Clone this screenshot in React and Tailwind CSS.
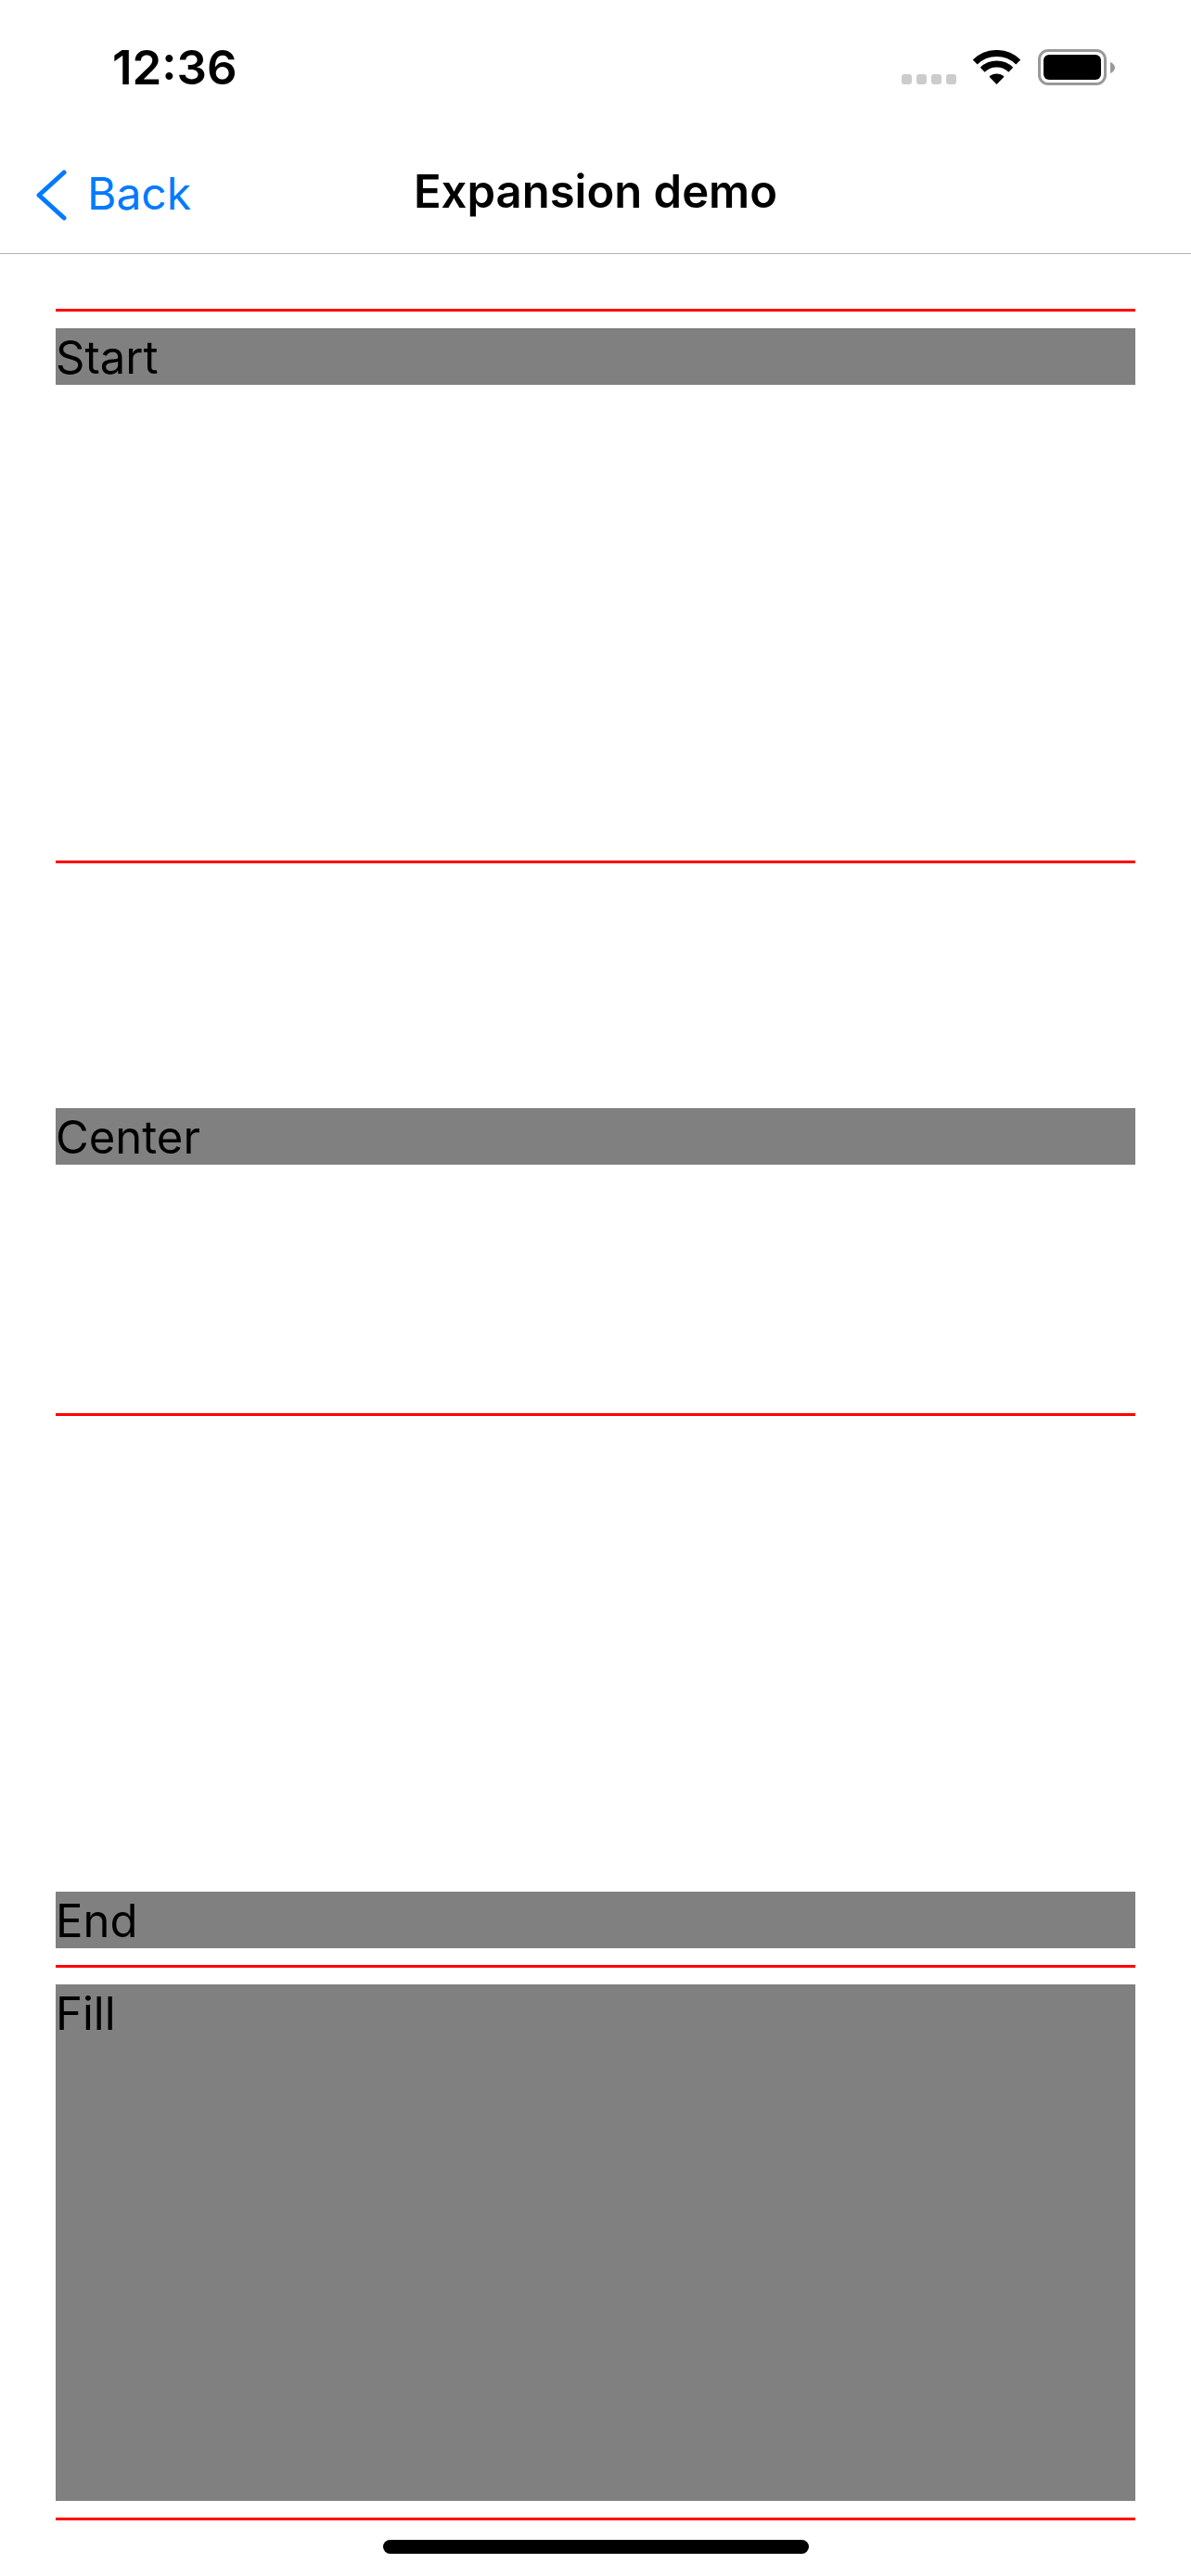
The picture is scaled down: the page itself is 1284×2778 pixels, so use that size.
function WifiIcon() {
  return (
    <svg width="51" height="37" viewBox="0 0 51 37" fill="none">
      <path d="M2.2 12.9A33.5 33.5 0 0 1 48.8 12.9" stroke="#000" strokeWidth="7" />
      <path d="M10.2 21.2A22 22 0 0 1 40.8 21.2" stroke="#000" strokeWidth="7" />
      <path d="M25.5 37L17.5 28.7A11.5 11.5 0 0 1 33.5 28.7Z" fill="#000" />
    </svg>
  )
}

function BatteryIcon() {
  return (
    <div className="flex items-center">
      <div className="w-[74px] h-[39px] rounded-[11px] border-[3px] border-[#999999] p-[3px]">
        <div className="w-full h-full rounded-[6px] bg-black" />
      </div>
      <svg className="ml-[4px]" width="5" height="12" viewBox="0 0 5 12">
        <path d="M0 0C3 1 5 3.500 5 6C5 8.500 3 11 0 12Z" fill="#999999" />
      </svg>
    </div>
  )
}

function Section({ className, label }) {
  return (
    <div className={`flex flex-col border-t-[3px] border-[#ff0000] pt-[18px] ${className}`}>
      <div className="h-[61px] bg-[#808080] text-[49px] leading-[63px] text-black">{label}</div>
    </div>
  )
}

export default function App() {
  return (
    <div className="w-[1284px] h-[2778px] bg-white flex flex-col font-['Inter',sans-serif]">
      <div className="h-[141px] flex items-start justify-between pl-[121px] pr-[82px]">
        <span className="mt-[44px] text-[51px] leading-[58px] font-semibold text-black">12:36</span>
        <div className="mt-[53px] flex items-end">
          <div className="flex gap-[5px] mb-[1px]">
            <div className="w-[11px] h-[11px] rounded-[3px] bg-[#cccccc]" />
            <div className="w-[11px] h-[11px] rounded-[3px] bg-[#cccccc]" />
            <div className="w-[11px] h-[11px] rounded-[3px] bg-[#cccccc]" />
            <div className="w-[11px] h-[11px] rounded-[3px] bg-[#cccccc]" />
          </div>
          <div className="ml-[18px] mb-[1px]"><WifiIcon /></div>
          <div className="ml-[19px]"><BatteryIcon /></div>
        </div>
      </div>

      <div className="relative h-[133px] border-b border-[#b2b2b2] flex items-center justify-center">
        <div className="absolute left-[37px] top-[39px] flex items-center text-[#007aff]">
          <svg className="ml-[2px]" width="33" height="55" viewBox="0 0 33 55" fill="none">
            <path d="M30 3L3 27.500L30 52" stroke="#007aff" strokeWidth="5" strokeLinecap="round" strokeLinejoin="round" />
          </svg>
          <span className="ml-[22px] mb-[2px] text-[48px] leading-[58px]">Back</span>
        </div>
        <span className="text-[49px] leading-[58px] font-semibold text-black">Expansion demo</span>
      </div>

      <div className="mt-[59px] px-[60px] flex flex-col">
        <Section label="Start" className="h-[595px] justify-start pb-[18px]" />
        <Section label="Center" className="h-[596px] justify-center pb-[22px]" />
        <Section label="End" className="h-[595px] justify-end pb-[18px]" />
        <div className="h-[596px] flex flex-col border-t-[3px] border-[#ff0000] py-[18px]">
          <div className="flex-1 bg-[#808080] text-[49px] leading-[63px] text-black">Fill</div>
        </div>
        <div className="h-[3px] bg-[#ff0000]" />
      </div>

      <div className="mt-[21px] mx-auto w-[459px] h-[15px] rounded-full bg-black" />
    </div>
  )
}
